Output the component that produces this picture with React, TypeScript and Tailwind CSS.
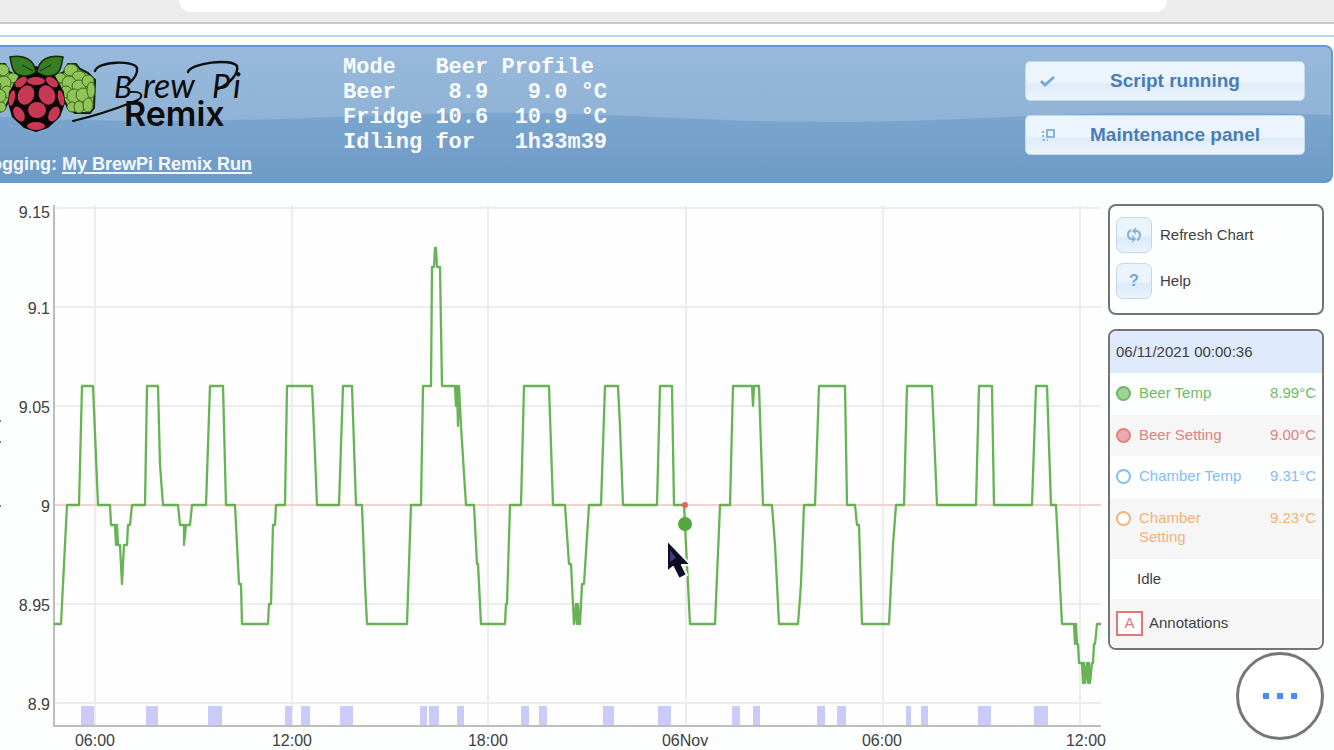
type Point = [number, number];

const beerTemp: Point[] = [
  [54, 8.94], [61, 8.94], [67, 9], [79, 9], [82, 9.06], [93, 9.06], [98, 9], [110, 9],
  [111, 8.99], [115, 8.99], [116, 8.98], [117, 8.99], [118, 8.98], [120, 8.98], [122, 8.96],
  [124, 8.98], [127, 8.98], [128, 8.99], [130, 8.99], [132, 9], [145, 9], [147, 9.06],
  [158, 9.06], [160, 9.02], [163, 9], [178, 9], [180, 8.99], [184, 8.99], [184, 8.98],
  [186, 8.99], [190, 8.99], [192, 9], [206, 9], [210, 9.06], [223, 9.06], [226, 9], [235, 9],
  [239, 8.96], [241, 8.96], [242, 8.94], [268, 8.94], [269, 8.95], [271, 8.95], [273, 8.99],
  [275, 8.99], [276, 9], [285, 9], [287, 9.06], [312, 9.06], [313, 9.05], [317, 9], [339, 9],
  [343, 9.06], [352, 9.06], [356, 9], [362, 9], [365, 8.96], [367, 8.94], [407, 8.94],
  [411, 9], [421, 9], [423, 9.06], [431, 9.06], [432, 9.12], [434, 9.12], [435, 9.13],
  [436, 9.13], [437, 9.12], [440, 9.12], [442, 9.06], [455, 9.06], [456, 9.05], [457, 9.06],
  [458, 9.04], [459, 9.06], [461, 9.04], [466, 9], [474, 9], [477, 8.97], [478, 8.97],
  [481, 8.94], [505, 8.94], [506, 8.95], [507, 8.95], [510, 9], [521, 9], [524, 9.06],
  [549, 9.06], [553, 9], [565, 9], [569, 8.97], [571, 8.97], [574, 8.94], [576, 8.95],
  [577, 8.94], [578, 8.95], [579, 8.94], [580, 8.94], [582, 8.96], [584, 8.96], [589, 9],
  [601, 9], [605, 9.06], [618, 9.06], [620, 9.04], [623, 9], [657, 9], [660, 9.06],
  [672, 9.06], [674, 9], [684, 9], [685, 8.99], [690, 8.94], [715, 8.94], [720, 9], [730, 9],
  [733, 9.06], [752, 9.06], [753, 9.05], [754, 9.06], [759, 9.06], [763, 9], [772, 9],
  [775, 8.98], [779, 8.94], [798, 8.94], [801, 8.96], [804, 9], [815, 9], [819, 9.06],
  [845, 9.06], [847, 9], [855, 9], [857, 8.99], [859, 8.99], [862, 8.94], [889, 8.94],
  [893, 8.98], [896, 9], [904, 9], [907, 9.06], [932, 9.06], [937, 9], [976, 9], [979, 9.06],
  [992, 9.06], [994, 9], [1032, 9], [1034, 9.03], [1036, 9.06], [1047, 9.06], [1051, 9],
  [1056, 9], [1062, 8.94], [1074, 8.94], [1075, 8.93], [1076, 8.94], [1077, 8.93],
  [1078, 8.93], [1079, 8.92], [1082, 8.92], [1083, 8.91], [1084, 8.92], [1085, 8.91],
  [1087, 8.92], [1088, 8.91], [1089, 8.92], [1090, 8.91], [1092, 8.92], [1093, 8.92],
  [1094, 8.93], [1095, 8.93], [1097, 8.94], [1101, 8.94],
];

// [start, width] of each heating / cooling period
const stateBars: Point[] = [
  [81, 13], [146, 12], [208, 14], [285, 7], [301, 9], [340, 13], [420, 7], [429, 10],
  [457, 7], [521, 8], [539, 8], [603, 11], [658, 13], [732, 8], [753, 7], [817, 8],
  [837, 9], [906, 5], [921, 7], [978, 13], [1034, 14],
];

const yTicks = [
  { value: 9.15, label: '9.15' },
  { value: 9.1, label: '9.1' },
  { value: 9.05, label: '9.05' },
  { value: 9, label: '9' },
  { value: 8.95, label: '8.95' },
  { value: 8.9, label: '8.9' },
];

const xTicks = [
  { x: 95, textX: 95, label: '06:00' },
  { x: 292, textX: 292, label: '12:00' },
  { x: 488, textX: 488, label: '18:00' },
  { x: 686, textX: 685, label: '06Nov' },
  { x: 883, textX: 882, label: '06:00' },
  { x: 1080, textX: 1086, label: '12:00' },
];

const legend = [
  {
    name: 'Beer Temp',
    value: '8.99',
    text: 'text-[#6fbb62]',
    dot: 'border-[#6fb764] bg-[#a0d198]',
    row: 'h-[42px]',
  },
  {
    name: 'Beer Setting',
    value: '9.00',
    text: 'text-[#e37f7f]',
    dot: 'border-[#e08080] bg-[#e9abab]',
    row: 'h-[41px] bg-[#f6f6f6]',
  },
  {
    name: 'Chamber Temp',
    value: '9.31',
    text: 'text-[#82bdf8]',
    dot: 'border-[#82bdf8] bg-white',
    row: 'h-[42px]',
  },
  {
    name: 'Chamber Setting',
    value: '9.23',
    text: 'text-[#f2b273]',
    dot: 'border-[#f2b273] bg-white',
    row: 'h-[61px] bg-[#f6f6f6]',
  },
];

const toY = (value: number) => Math.round(505 - (value - 9) * 1980);

const grapes = [
  [60, 78, 6, 5], [71, 70, 7, 6], [79, 77, 7, 6], [69, 83, 7, 7], [79, 86, 7, 6], [88, 81, 6, 6],
  [66, 92, 6, 6], [74, 96, 7, 7], [83, 95, 7, 7], [91, 90, 4, 8], [72, 107, 5, 5], [79, 107, 5, 6],
  [88, 105, 5, 7],
];

const Grapes = () => (
  <g fill="#8fc456" stroke="#3f6420" strokeWidth="1">
    <path d="M56 76L64 72 68 64 76 64 80 69 88 73 95 80 94 108 90 113 75 113 68 108 64 100z" fill="#8fc456" stroke="#152008" strokeWidth="2" strokeLinejoin="round" />
    {grapes.map(([cx, cy, rx, ry]) => (
      <ellipse key={`${cx}-${cy}`} cx={cx} cy={cy} rx={rx} ry={ry} />
    ))}
  </g>
);

const Logo = () => (
  <svg className="block h-[86px] w-[275px]" viewBox="-20 50 275 86" role="img" aria-label="BrewPi Remix">
    <Grapes />
    <g transform="translate(73 0) scale(-1 1)">
      <Grapes />
    </g>
    <path d="M36 66L20 74 9 92 8 103 12 117 24 128 36 132 48 128 60 117 65 103 64 92 54 74z" fill="#0b0508" />
    <g fill="#c73853">
      <ellipse cx="36" cy="81" rx="9" ry="4" />
      <ellipse cx="21" cy="82" rx="7" ry="4" transform="rotate(-38 21 82)" />
      <ellipse cx="52" cy="82" rx="7" ry="4" transform="rotate(38 52 82)" />
      <ellipse cx="26" cy="95" rx="8" ry="10" transform="rotate(25 26 95)" />
      <ellipse cx="47" cy="95" rx="8" ry="10" transform="rotate(-25 47 95)" />
      <ellipse cx="12" cy="98" rx="3" ry="8" transform="rotate(12 12 98)" />
      <ellipse cx="61" cy="98" rx="3" ry="8" transform="rotate(-12 61 98)" />
      <ellipse cx="37" cy="110" rx="9" ry="8" />
      <ellipse cx="19" cy="114" rx="5" ry="8" transform="rotate(-30 19 114)" />
      <ellipse cx="54" cy="114" rx="5" ry="8" transform="rotate(30 54 114)" />
      <ellipse cx="36" cy="126" rx="9" ry="4" />
    </g>
    <g fill="#377d22" stroke="#102a0a" strokeWidth="1.5">
      <path d="M36 72C34 60 25 54 10 57C12 65 11 75 24 76C29 76 33 74 36 72z" />
      <path d="M37 72C39 60 48 54 63 57C61 65 62 75 49 76C44 76 40 74 37 72z" />
      <path d="M22 65L33 71M51 65L40 71" fill="none" strokeWidth="1" />
    </g>
    <g fill="none" stroke="#0c0c0c" strokeWidth="2.4" strokeLinecap="round" strokeLinejoin="round">
      <path d="M95 71C98 61 134 60 137 68C138 74 133 80 128 84" />
      <path d="M130 92C144 91 145 98 133 102C113 110 90 117 73 121" strokeWidth="2" />
      <path d="M188 72C191 63 231 58 237 66C239 74 229 84 218 89" />
    </g>
    <g fill="#0c0c0c">
      <text y="98" className="font-['Lato',sans-serif] text-[34px] italic">
        <tspan x="114" className="text-[30px]">B</tspan>
        <tspan x="143">rew</tspan>
        <tspan x="212" className="text-[32px]">P</tspan>
        <tspan x="233">i</tspan>
      </text>
      <text x="124" y="126" className="font-['Inter',sans-serif] text-[34px] font-semibold">
        Remix
      </text>
    </g>
  </svg>
);

const Header = () => (
  <header className="relative -ml-8 mr-px flex h-[138px] overflow-hidden rounded-lg border-2 border-[#6498d4] bg-gradient-to-b from-[#86afd6] to-[#6e9bc7] pl-[10px]">
    {/* Wave */}
    <svg
      className="absolute inset-0 h-full w-full"
      viewBox="-30 47 1361 134"
      preserveAspectRatio="none"
      aria-hidden="true"
    >
      <defs>
        <linearGradient id="gloss" x1="0" y1="0" x2="0" y2="1">
          <stop offset="0" stopColor="#98b9dc" />
          <stop offset="1" stopColor="#8fb2d5" />
        </linearGradient>
      </defs>
      <path
        d="M-30 47H1332V115C1280 113 1220 113 1160 113C1040 113 940 122 830 122C710 122 620 113 500 113C380 113 290 121 160 121C80 121 20 118 -30 115z"
        fill="url(#gloss)"
      />
    </svg>
    <div className="relative w-[363px] shrink-0 pt-[3px]">
      <Logo />
      <p className="mt-4 whitespace-nowrap text-[18px] leading-6 font-bold text-[#f4f8fc]">
        Logging:{' '}
        <a href="#run" className="underline decoration-2 underline-offset-2">
          My BrewPi Remix Run
        </a>
      </p>
    </div>
    <pre className="relative pt-2 font-['Liberation_Mono',monospace] text-[22px] leading-[25px] font-bold text-[#f8fbfe]">
      {'Mode   Beer Profile\nBeer    8.9   9.0 °C\nFridge 10.6  10.9 °C\nIdling for   1h33m39'}
    </pre>
    <div className="relative mr-[26px] ml-auto flex w-[280px] shrink-0 flex-col gap-[14px] pt-[14px]">
      <button className="flex h-10 items-center gap-1 rounded-[5px] border border-[#c3d9ee] bg-gradient-to-b from-[#ecf4fd] from-50% via-[#dfecf8] via-60% to-[#ebf4fc] px-[14px] text-[19px] font-bold text-[#4a7db4]">
        <svg className="h-4 w-4" viewBox="0 0 16 16" fill="none" stroke="#76a8d6" strokeWidth="3" aria-hidden="true">
          <path d="M1 8L5 12L14 4" />
        </svg>
        <span className="grow">Script running</span>
      </button>
      <button className="flex h-10 items-center gap-1 rounded-[5px] border border-[#c3d9ee] bg-gradient-to-b from-[#ecf4fd] from-50% via-[#dfecf8] via-60% to-[#ebf4fc] px-[14px] text-[19px] font-bold text-[#4a7db4]">
        <svg className="h-4 w-4" viewBox="0 0 16 16" fill="none" stroke="#8bb4dc" aria-hidden="true">
          <path d="M7 3H14V10H7z" strokeWidth="2" />
          <path d="M3 4V13M3 13H8" strokeWidth="2" strokeDasharray="2 2" />
        </svg>
        <span className="grow">Maintenance panel</span>
      </button>
    </div>
  </header>
);

const Chart = () => (
  <svg
    className="block h-auto w-full text-[16px]"
    viewBox="0 200 1108 550"
    role="img"
    aria-label="Beer temperature"
  >
    <rect x="55" y="205" width="1046" height="520" fill="#fefefe" />
    <g stroke="#ededed" strokeWidth="2">
      {xTicks.map((tick) => (
        <path key={tick.x} d={`M${tick.x} 205V725`} />
      ))}
      {yTicks.map((tick) => (
        <path key={tick.label} d={`M55 ${toY(tick.value)}H1101`} />
      ))}
    </g>
    <g fill="#cbcbfa">
      {stateBars.map(([x, width]) => (
        <rect key={x} x={x} y="706" width={width} height="19" />
      ))}
    </g>
    <path d="M54 205V726H1101" fill="none" stroke="#bdbdbd" strokeWidth="2" />
    <path d="M55 505H1101" stroke="#f8d0d0" strokeWidth="2" />
    <polyline
      points={beerTemp.map(([x, value]) => `${x},${toY(value)}`).join(' ')}
      fill="none"
      stroke="#57ab43"
      strokeWidth="2.3"
      strokeOpacity="0.9"
      strokeLinejoin="round"
    />
    <circle cx="685" cy="505" r="3" fill="#e06666" />
    <circle cx="685" cy="524" r="7" fill="#52a83c" />
    {/* Edge of the axis title */}
    <path d="M0 421h1M0 442h1M0 506h1" stroke="#5f7fb8" strokeWidth="2" />
    <g fill="#404040">
      {/* The top label is kept inside the plot */}
      {yTicks.map((tick) => (
        <text key={tick.label} x="50" y={Math.max(toY(tick.value) + 7, 218)} textAnchor="end">
          {tick.label}
        </text>
      ))}
      {xTicks.map((tick) => (
        <text key={tick.x} x={tick.textX} y="746" textAnchor="middle">
          {tick.label}
        </text>
      ))}
    </g>
    {/* Pointer */}
    <path
      d="M667 540V572L673 567L679 579L687 575L682 565H691z"
      fill="#0d0d24"
      stroke="#ffffff"
      strokeWidth="2"
      strokeLinejoin="round"
    />
    <path d="M670 550V562L676 558z" fill="#3c3c78" />
  </svg>
);

const Sidebar = () => (
  <aside className="mr-[10px] w-[216px] shrink-0 pt-1 text-[15px] text-[#404040]">
    <div className="flex h-[111px] flex-col gap-[10px] rounded-lg border-2 border-[#757575] px-[6px] pt-[11px]">
      <button className="flex items-center gap-2">
        <span className="flex h-9 w-9 items-center justify-center rounded-[7px] border border-[#c0d7ee] bg-gradient-to-b from-[#ebf4fd] from-50% via-[#dceaf8] via-60% to-[#e9f3fc]">
          <svg className="h-4 w-4" viewBox="0 0 16 16" fill="none" stroke="#86b2dc" strokeWidth="2" aria-hidden="true">
            <path d="M5 3C1 5 1 11 5 12H8" />
            <path d="M11 13C15 11 15 5 11 4H8" />
            <path d="M10 1L7 4L10 7M6 9L9 12L6 15" strokeWidth="1.5" />
          </svg>
        </span>
        <span>Refresh Chart</span>
      </button>
      <button className="flex items-center gap-2">
        <span className="flex h-9 w-9 items-center justify-center rounded-[7px] border border-[#c0d7ee] bg-gradient-to-b from-[#ebf4fd] from-50% via-[#dceaf8] via-60% to-[#e9f3fc] text-[16px] font-bold text-[#70a4d6]">
          ?
        </span>
        <span>Help</span>
      </button>
    </div>

    <div className="mt-[14px] overflow-hidden rounded-lg border-2 border-[#757575]">
      <div className="flex h-[42px] items-center bg-[#dfebfc] px-[6px]">06/11/2021 00:00:36</div>
      {legend.map((item) => (
        <button
          key={item.name}
          className={`flex w-full items-start gap-2 px-[6px] pt-[10px] text-left leading-[19px] ${item.row} ${item.text}`}
        >
          <span className={`mt-[3px] h-[15px] w-[15px] shrink-0 rounded-full border-2 ${item.dot}`} />
          <span className="grow pr-4">{item.name}</span>
          <span className="shrink-0">{item.value}°C</span>
        </button>
      ))}
      <div className="flex h-10 items-center px-[27px]">Idle</div>
      <button className="flex h-[49px] w-full items-center gap-[6px] bg-[#f6f6f6] px-[6px]">
        <span className="flex h-[25px] w-[27px] items-center justify-center border-2 border-[#e27777] bg-white text-[#e27777]">
          A
        </span>
        <span>Annotations</span>
      </button>
    </div>
  </aside>
);

const App = () => {
  return (
    <div className="overflow-hidden bg-[#fdfefe] font-['Liberation_Sans',sans-serif]">
      {/* Browser toolbar */}
      <div className="h-6 border-b-2 border-[#cacaca] bg-[#ececec] pr-[167px] pl-[179px]">
        <div className="h-3 rounded-b-3xl bg-white" />
      </div>
      <div className="mb-2 h-[13px] border-b-2 border-[#bcd3ea] bg-white" />

      <Header />

      <main className="mt-[17px] flex items-start">
        <div className="min-w-0 grow">
          <Chart />
        </div>
        <Sidebar />
      </main>

      <button
        aria-label="More"
        className="fixed right-[10px] bottom-[10px] flex h-[88px] w-[88px] items-center justify-center gap-2 rounded-full border-[3px] border-[#777777] bg-white"
      >
        <span className="h-[6px] w-[6px] bg-[#4a8cf0]" />
        <span className="h-[6px] w-[6px] bg-[#4a8cf0]" />
        <span className="h-[6px] w-[6px] bg-[#4a8cf0]" />
      </button>
    </div>
  );
};

export default App;
